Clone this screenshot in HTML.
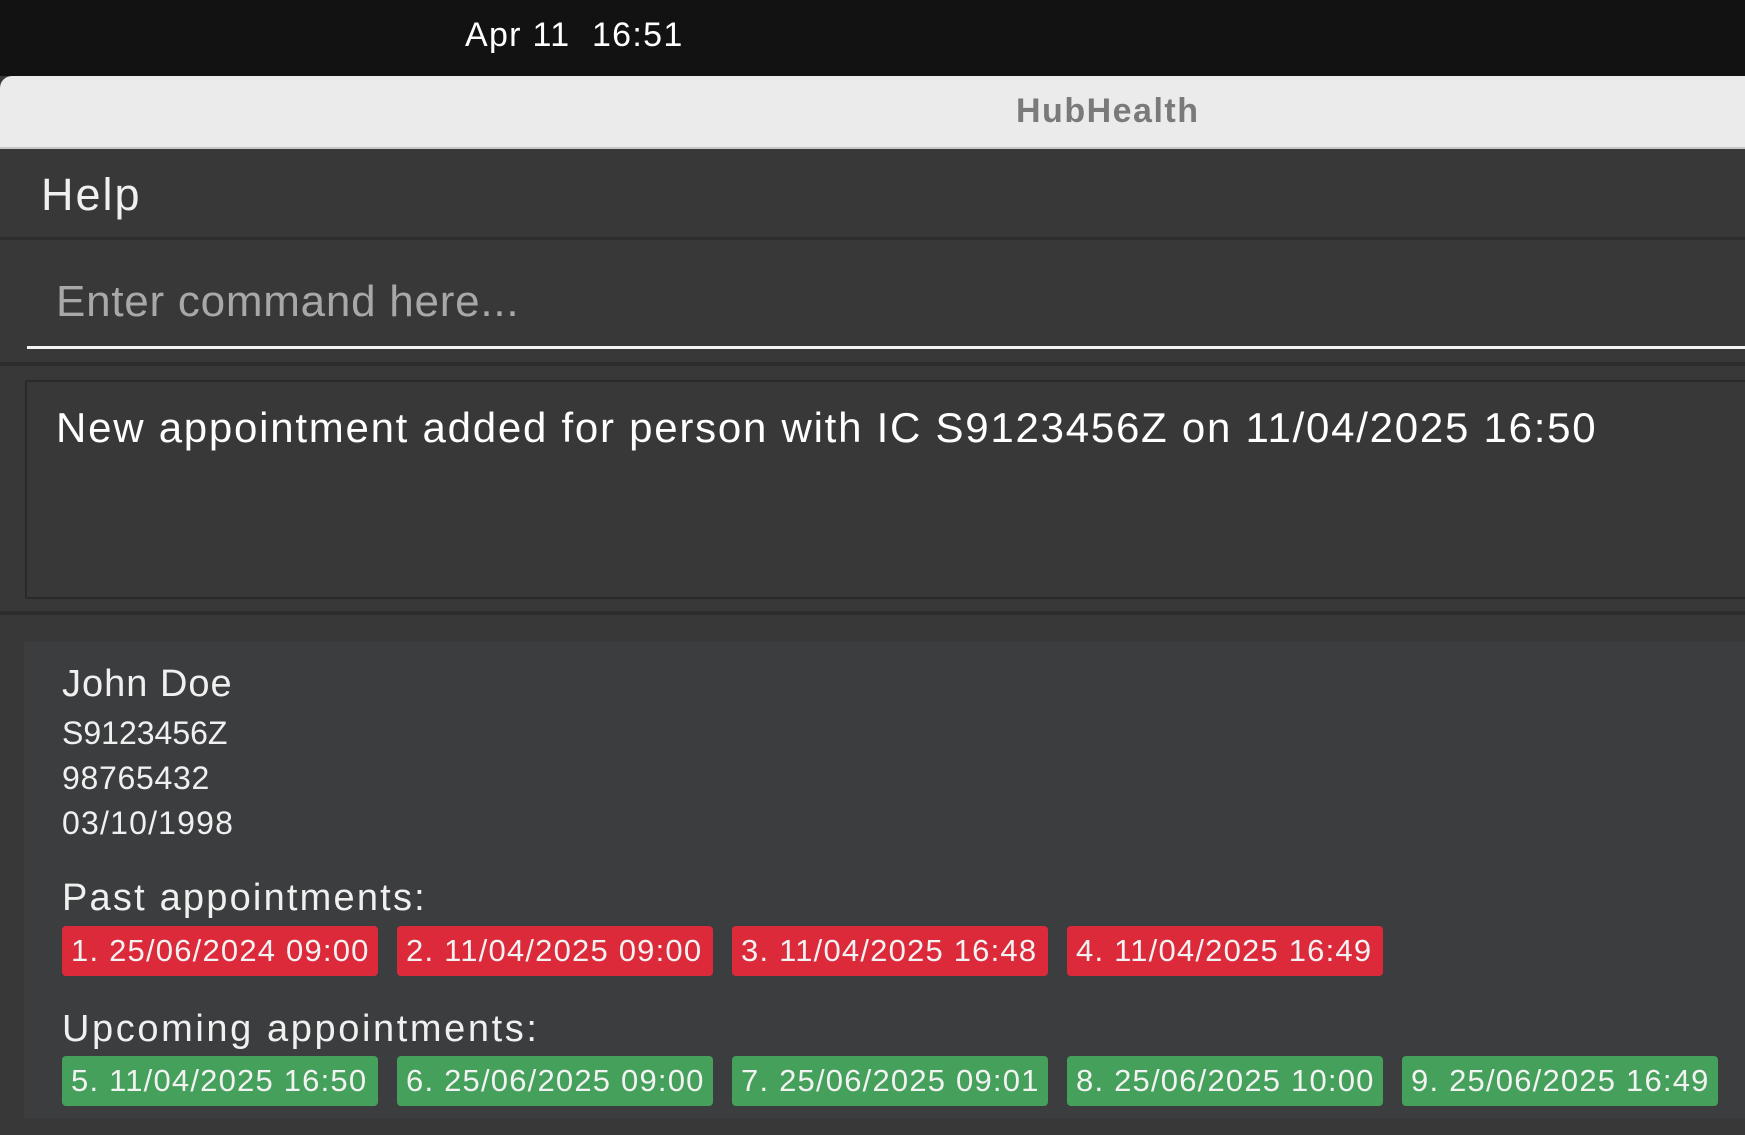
<!DOCTYPE html>
<html><head><meta charset="utf-8"><style>
*{margin:0;padding:0;box-sizing:border-box}
body{width:1745px;height:1135px;overflow:hidden;background:#383838;font-family:"Liberation Sans","DejaVu Sans",sans-serif;position:relative}
div{position:absolute}
.t{white-space:nowrap;line-height:1}
.tag{height:50px;width:316px;border-radius:4px;color:#f2f2f2;font-size:31px;line-height:50px;padding-left:9px;white-space:nowrap;letter-spacing:1.2px}
.r{background:#dc2a3a}.g{background:#44a05a}
</style></head><body>
<div style="left:0;top:0;width:1745px;height:76px;background:#121212"></div>
<div class="t" style="left:465px;top:18px;font-size:34px;color:#fff;letter-spacing:1.3px">Apr 11&nbsp;&nbsp;16:51</div>
<div style="left:0;top:76px;width:1745px;height:73px;background:#ebebeb;border-top-left-radius:12px;border-bottom:2px solid #c8c8c8"></div>
<div class="t" style="left:1016px;top:94px;font-size:34px;color:#7a7a7a;font-weight:bold;letter-spacing:1.5px">HubHealth</div>
<div style="left:0;top:149px;width:1745px;height:89px;background:#383838"></div>
<div class="t" style="left:41px;top:172px;font-size:45px;color:#f0f0f0;letter-spacing:2px">Help</div>
<div style="left:0;top:237px;width:1745px;height:3px;background:#2d2d2d"></div>
<div class="t" style="left:56px;top:280px;font-size:44px;color:#a8a8a8;letter-spacing:0.75px">Enter command here...</div>
<div style="left:27px;top:346px;width:1718px;height:3px;background:#f4f4f4"></div>
<div style="left:0;top:362px;width:1745px;height:4px;background:#2d2d2d"></div>
<div style="left:25px;top:380px;width:1730px;height:219px;border:2px solid #2a2a2a;background:#383838"></div>
<div class="t" style="left:56px;top:407px;font-size:42px;color:#fff;letter-spacing:1.75px">New appointment added for person with IC S9123456Z on 11/04/2025 16:50</div>
<div style="left:0;top:611px;width:1745px;height:4px;background:#2d2d2d"></div>
<div style="left:24px;top:642px;width:1721px;height:476px;background:#3c3d3f"></div>
<div class="t" style="left:62px;top:665px;font-size:38px;color:#f0f0f0;letter-spacing:1px">John Doe</div>
<div class="t" style="left:62px;top:717px;font-size:32px;color:#f0f0f0">S9123456Z</div>
<div class="t" style="left:62px;top:762px;font-size:32px;color:#f0f0f0;letter-spacing:0.7px">98765432</div>
<div class="t" style="left:62px;top:807px;font-size:32px;color:#f0f0f0;letter-spacing:1.2px">03/10/1998</div>
<div class="t" style="left:62px;top:879px;font-size:38px;color:#f0f0f0;letter-spacing:2.2px">Past appointments:</div>
<div class="tag r" style="left:62px;top:926px">1. 25/06/2024 09:00</div>
<div class="tag r" style="left:397px;top:926px">2. 11/04/2025 09:00</div>
<div class="tag r" style="left:732px;top:926px">3. 11/04/2025 16:48</div>
<div class="tag r" style="left:1067px;top:926px">4. 11/04/2025 16:49</div>
<div class="t" style="left:62px;top:1010px;font-size:38px;color:#f0f0f0;letter-spacing:2.6px">Upcoming appointments:</div>
<div class="tag g" style="left:62px;top:1056px">5. 11/04/2025 16:50</div>
<div class="tag g" style="left:397px;top:1056px">6. 25/06/2025 09:00</div>
<div class="tag g" style="left:732px;top:1056px">7. 25/06/2025 09:01</div>
<div class="tag g" style="left:1067px;top:1056px">8. 25/06/2025 10:00</div>
<div class="tag g" style="left:1402px;top:1056px">9. 25/06/2025 16:49</div>
</body></html>
